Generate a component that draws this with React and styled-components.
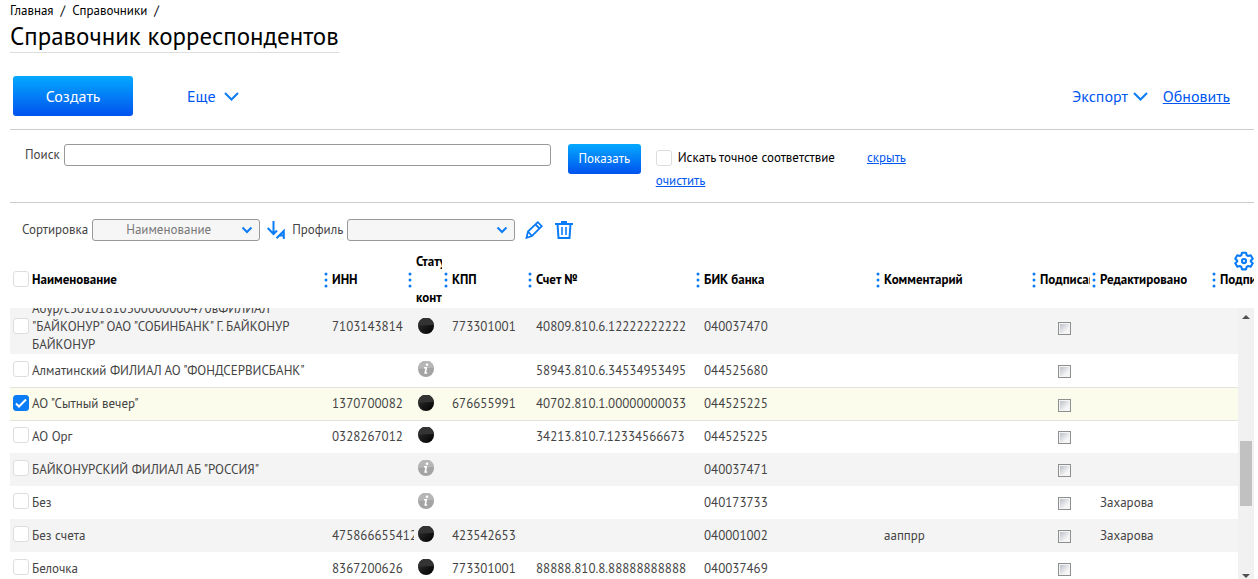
import { useLayoutEffect, useRef } from "react";
import styled, { createGlobalStyle } from "styled-components";

const GlobalStyle = createGlobalStyle`
  * {
    box-sizing: border-box;
  }

  body {
    margin: 0;
    background: #fff;
    color: #000;
    font: 13px/18px "PT Sans", "Noto Sans", sans-serif;
  }

  button, input, select {
    font: inherit;
  }
`;

const Page = styled.div`
  display: flex;
  flex-direction: column;
  height: 100vh;
  padding: 2px 4px 0 10px;
  overflow: hidden;
`;

const Breadcrumbs = styled.nav`
  display: flex;
  gap: 7px;

  a {
    color: #000;
    text-decoration: none;
  }
`;

const Title = styled.h1`
  align-self: flex-start;
  margin: 0;
  border-bottom: 1px solid #ddd;
  font-size: 25px;
  font-weight: 400;
  line-height: 32px;
`;

const Toolbar = styled.div`
  display: flex;
  align-items: center;
  padding: 23px 24px 13px 3px;
  border-bottom: 1px solid #ccc;
`;

const PrimaryButton = styled.button`
  width: ${({ $small }) => ($small ? "73px" : "120px")};
  height: ${({ $small }) => ($small ? "30px" : "40px")};
  padding: 0;
  border: none;
  border-radius: 3px;
  background: linear-gradient(#05a9ff, #0052ee);
  color: #fff;
  font-size: ${({ $small }) => ($small ? "13px" : "16px")};
  cursor: pointer;
`;

const MenuButton = styled.button`
  display: flex;
  align-items: center;
  gap: ${({ $gap }) => $gap};
  padding: 0;
  border: none;
  background: none;
  color: #0057f0;
  font-size: 16px;
  cursor: pointer;
`;

const MoreMenu = styled.div`
  margin-left: 54px;
`;

const ToolbarRight = styled.div`
  display: flex;
  align-items: center;
  gap: 15px;
  margin-left: auto;
`;

const Link = styled.a`
  color: #0057f0;
  font-size: ${({ $large }) => ($large ? "16px" : "13px")};
`;

const SearchBar = styled.form`
  display: flex;
  align-items: flex-start;
  height: 73px;
  padding: 14px 0 0 15px;
  border-bottom: 1px solid #ccc;
`;

const FieldLabel = styled.label`
  display: flex;
  align-items: center;
  gap: 4px;
  color: #444;
`;

const SearchInput = styled.input`
  width: 487px;
  height: 22px;
  padding: 0 6px;
  border: 1px solid #999;
  border-radius: 3px;
`;

const SearchButton = styled(PrimaryButton)`
  margin: 0 15px 0 17px;
`;

const SearchOptions = styled.div`
  display: flex;
  flex-direction: column;
  align-items: flex-start;
  gap: 5px;
  padding-top: 5px;
`;

const OptionsRow = styled.div`
  display: flex;
  align-items: center;
  gap: 32px;

  label {
    display: flex;
    align-items: center;
    gap: 6px;
  }
`;

const CheckBox = styled.input.attrs({ type: "checkbox" })`
  appearance: none;
  flex: none;
  width: 16px;
  height: 16px;
  margin: 0;
  border: 1px solid #ddd;
  border-radius: 3px;
  background: #fff;

  &:checked {
    border-color: #0a7cf5;
    background: #0a7cf5
      url("data:image/svg+xml,%3Csvg xmlns='http://www.w3.org/2000/svg' viewBox='0 0 16 16'%3E%3Cpath d='M3 8.5l3 3 7-7' fill='none' stroke='white' stroke-width='2'/%3E%3C/svg%3E")
      center / 16px;
  }
`;

const SortBar = styled.div`
  display: flex;
  align-items: center;
  gap: 7px;
  padding: 16px 0 11px 12px;
`;

const SelectBox = styled.span`
  display: grid;
  align-items: center;
  width: 168px;

  select,
  svg {
    grid-area: 1 / 1;
  }

  select {
    appearance: none;
    width: 100%;
    height: 22px;
    padding: 0 46px 0 33px;
    border: 1px solid #999;
    border-radius: 3px;
    background: #f6f6f6;
    color: #777;
  }

  svg {
    justify-self: end;
    margin-right: 7px;
    pointer-events: none;
  }
`;

const IconButton = styled.button`
  display: flex;
  padding: 0;
  border: none;
  background: none;
  color: #0a7cf5;
  cursor: pointer;
`;

const IconGroup = styled.div`
  display: flex;
  align-items: center;
  gap: 12px;
  padding-left: 3px;
`;

const GridWrap = styled.div`
  position: relative;
  display: flex;
  flex: 1;
  min-height: 0;
`;

const Grid = styled.table`
  display: flex;
  flex: 1;
  flex-direction: column;
  min-height: 0;

  thead,
  tbody {
    display: block;
  }

  tr {
    display: grid;
    grid-template-columns: 20px 300px 84px 36px 84px 168px 180px 156px 60px 120px minmax(0, 1fr);
    align-items: center;
  }
`;

const Head = styled.thead`
  margin-right: -16px;

  tr {
    height: 56px;
  }
`;

const HeadCell = styled.th`
  display: flex;
  align-items: center;
  justify-content: space-between;
  min-width: 0;
  padding: 0 0 0 2px;
  text-align: left;
  white-space: nowrap;

  span {
    overflow: hidden;
  }

  svg {
    flex: none;
  }
`;

const CheckCell = styled.td`
  display: flex;
  padding: 0 0 3px 3px;
`;

const Body = styled.tbody`
  flex: 1;
  min-height: 0;
  overflow-y: auto;
  scrollbar-width: none;
`;

const Row = styled.tr`
  min-height: 33px;
  background: ${({ $striped }) => ($striped ? "#f4f4f4" : "none")};
  ${({ $selected }) =>
    $selected &&
    `
    border-top: 1px solid #e4e4de;
    background: #fbfcec;
    box-shadow: 0 1px 0 #e4e4de;
  `}
`;

const Cell = styled.td`
  min-width: 0;
  padding: 0 0 0 2px;
  overflow: hidden;
  color: #444;
  white-space: ${({ $wrap }) => ($wrap ? "normal" : "nowrap")};
`;

const StatusCell = styled.td`
  display: flex;
  padding: 0 0 3px 4px;
`;

const SignCell = styled.td`
  display: flex;
  justify-content: center;
  padding: 2px 7px 0 0;
`;

const SignBox = styled.input.attrs({ type: "checkbox" })`
  appearance: none;
  width: 13px;
  height: 13px;
  margin: 0;
  padding: 1px;
  border: 1px solid #8e8f8f;
  background:
    linear-gradient(135deg, #bcc0c9, #f6f6f6 75%) content-box,
    #f4f4f4;
`;

const ScrollTrack = styled.div`
  display: flex;
  flex: none;
  flex-direction: column;
  align-items: center;
  width: 16px;
  margin-top: 56px;
  padding-top: 7px;
  background: #f1f1f1;
`;

const ScrollThumb = styled.div`
  flex: 0 0 65px;
  width: 12px;
  background: #c1c1c1;
`;

const ScrollSpace = styled.div`
  flex: ${({ $size }) => $size} 1 0;
`;

// sits over the header row, in the corner of the table
const Settings = styled(IconButton)`
  position: absolute;
  top: -1px;
  right: 0;
`;

function Chevron({ wide }) {
  return wide ? (
    <svg width="15" height="9" viewBox="0 0 15 9" fill="none" stroke="#0a7cf5" strokeWidth="2">
      <path d="M1 1l6.5 6.5L14 1" />
    </svg>
  ) : (
    <svg width="12" height="8" viewBox="0 0 12 8" fill="none" stroke="#0a7cf5" strokeWidth="2">
      <path d="M1.5 1.5L6 6l4.5-4.5" />
    </svg>
  );
}

function Dots() {
  return (
    <svg width="8" height="16" viewBox="0 0 8 16" fill="#0a7cf5">
      <circle cx="4" cy="2" r="1.5" />
      <circle cx="4" cy="8" r="1.5" />
      <circle cx="4" cy="14" r="1.5" />
    </svg>
  );
}

function SortIcon() {
  return (
    <svg width="18" height="18" viewBox="0 0 18 18" fill="none" stroke="currentColor" strokeWidth="2">
      <path d="M6.5 0v13M.7 7l5.8 6 3.5-3.500M9.500 17.300l7.300-7.300v8M12 14.500h5" />
    </svg>
  );
}

function PencilIcon() {
  return (
    <svg width="18" height="18" viewBox="0 0 18 18" fill="none" stroke="currentColor" strokeWidth="1.8">
      <path d="M3 10.500L12.800 1.200l4 4L7 15l-5.500 1.800zM3 10.500L7 15M10.500 3.500l4 4" />
    </svg>
  );
}

function TrashIcon() {
  return (
    <svg width="18" height="18" viewBox="0 0 18 18" fill="none" stroke="currentColor" strokeWidth="2">
      <path d="M0 3h18M6 1h6M2.500 3l1 14h11l1-14" />
      <path d="M7 6v8M11 6v8" strokeWidth="1.600" />
    </svg>
  );
}

function GearIcon() {
  return (
    <svg width="20" height="20" viewBox="0 0 24 24" fill="none" stroke="currentColor" strokeWidth="2.500" strokeLinejoin="round">
      <path d="M9.500 2h5l.7 3 1.800 1 3-.9 2.500 4.300-2.300 2.100v1l2.300 2.100-2.500 4.300-3-.9-1.800 1-.7 3h-5l-.7-3-1.800-1-3 .9-2.500-4.300 2.300-2.100v-1L1.500 9.400 4 5.100l3 .9 1.800-1z" />
      <circle cx="12" cy="12" r="2.500" />
    </svg>
  );
}

function StatusIcon({ status }) {
  return status === "info" ? (
    <svg width="16" height="16" viewBox="0 0 16 16">
      <circle cx="8" cy="8" r="8" fill="#a3a3a3" />
      <path d="M0 8a8 8 0 0 1 16-1q-8 0-16 1z" fill="#b6b6b6" />
      <circle cx="9" cy="3.800" r="1.300" fill="#fff" />
      <path d="M6 6.800h2.300L7.200 12h2" fill="none" stroke="#fff" strokeWidth="1.600" />
    </svg>
  ) : (
    <svg width="16" height="16" viewBox="0 0 16 16">
      <defs>
        <linearGradient id="ball" x1="0" y1="0" x2="1" y2="1">
          <stop offset="0" stopColor="#333" />
          <stop offset="1" stopColor="#000" />
        </linearGradient>
      </defs>
      <circle cx="8" cy="8" r="8" fill="url(#ball)" />
      <path d="M0 8a8 8 0 0 1 16-1q-8 0-16 1z" fill="#333" />
    </svg>
  );
}

const columns = [
  "Наименование",
  "ИНН",
  <>Статус<br /><br />контроля</>,
  "КПП",
  "Счет №",
  "БИК банка",
  "Комментарий",
  "Подписано",
  "Редактировано",
  "Подписано",
];

const rows = [
  { name: 'Абур/с30101810300000000470вФИЛИАЛ "БАЙКОНУР" ОАО "СОБИНБАНК" Г. БАЙКОНУР БАЙКОНУР', inn: "7103143814", status: "black", kpp: "773301001", account: "40809.810.6.12222222222", bik: "040037470" },
  { name: 'Алматинский ФИЛИАЛ АО "ФОНДСЕРВИСБАНК"', status: "info", account: "58943.810.6.34534953495", bik: "044525680" },
  { name: 'АО "Сытный вечер"', inn: "1370700082", status: "black", kpp: "676655991", account: "40702.810.1.00000000033", bik: "044525225", selected: true },
  { name: "АО Орг", inn: "0328267012", status: "black", account: "34213.810.7.12334566673", bik: "044525225" },
  { name: 'БАЙКОНУРСКИЙ ФИЛИАЛ АБ "РОССИЯ"', status: "info", bik: "040037471" },
  { name: "Без", status: "info", bik: "040173733", editor: "Захарова" },
  { name: "Без счета", inn: "475866655412", status: "black", kpp: "423542653", bik: "040001002", comment: "ааппрр", editor: "Захарова" },
  { name: "Белочка", inn: "8367200626", status: "black", kpp: "773301001", account: "88888.810.8.88888888888", bik: "040037469" },
];

function DirectoryRow({ row, striped }) {
  return (
    <Row $striped={striped} $selected={row.selected}>
      <CheckCell>
        <CheckBox aria-label={row.name} defaultChecked={row.selected} />
      </CheckCell>
      <Cell $wrap>{row.name}</Cell>
      <Cell>{row.inn}</Cell>
      <StatusCell>
        <StatusIcon status={row.status} />
      </StatusCell>
      <Cell>{row.kpp}</Cell>
      <Cell>{row.account}</Cell>
      <Cell>{row.bik}</Cell>
      <Cell>{row.comment}</Cell>
      <SignCell>
        <SignBox aria-label="Подписано" />
      </SignCell>
      <Cell>{row.editor}</Cell>
      <Cell />
    </Row>
  );
}

function DirectoryTable() {
  const bodyRef = useRef(null);

  useLayoutEffect(() => {
    bodyRef.current.scrollTop = 8;
  }, []);

  return (
    <GridWrap>
      <Grid>
        <Head>
          <tr>
            <CheckCell as="th">
              <CheckBox aria-label="Выбрать все" />
            </CheckCell>
            {columns.map((title, i) => (
              <HeadCell key={i}>
                <span>{title}</span>
                {i < columns.length - 1 && <Dots />}
              </HeadCell>
            ))}
          </tr>
        </Head>
        <Body ref={bodyRef}>
          {rows.map((row, i) => (
            <DirectoryRow key={i} row={row} striped={i % 2 === 0} />
          ))}
        </Body>
      </Grid>
      <ScrollTrack>
        <svg width="8" height="4" viewBox="0 0 8 4" fill="#505050">
          <path d="M0 4l4-4 4 4z" />
        </svg>
        <ScrollSpace $size={122} />
        <ScrollThumb />
        <ScrollSpace $size={68} />
        <svg width="8" height="5" viewBox="0 0 8 5" fill="#505050">
          <path d="M0 0h8L4 4z" />
        </svg>
      </ScrollTrack>
      <Settings aria-label="Настройки">
        <GearIcon />
      </Settings>
    </GridWrap>
  );
}

export default function App() {
  return (
    <Page>
      <GlobalStyle />
      <Breadcrumbs>
        <a href="#home">Главная</a>
        <span>/</span>
        <a href="#directories">Справочники</a>
        <span>/</span>
      </Breadcrumbs>
      <Title>Справочник корреспондентов</Title>

      <Toolbar>
        <PrimaryButton>Создать</PrimaryButton>
        <MoreMenu>
          <MenuButton $gap="8px">
            Еще <Chevron wide />
          </MenuButton>
        </MoreMenu>
        <ToolbarRight>
          <MenuButton $gap="5px">
            Экспорт <Chevron wide />
          </MenuButton>
          <Link href="#refresh" $large>Обновить</Link>
        </ToolbarRight>
      </Toolbar>

      <SearchBar>
        <FieldLabel>
          Поиск
          <SearchInput type="text" />
        </FieldLabel>
        <SearchButton type="button" $small>Показать</SearchButton>
        <SearchOptions>
          <OptionsRow>
            <label>
              <CheckBox />
              Искать точное соответствие
            </label>
            <Link href="#hide">скрыть</Link>
          </OptionsRow>
          <Link href="#clear">очистить</Link>
        </SearchOptions>
      </SearchBar>

      <SortBar>
        <FieldLabel>
          Сортировка
          <SelectBox>
            <select defaultValue="name">
              <option value="name">Наименование</option>
            </select>
            <Chevron />
          </SelectBox>
        </FieldLabel>
        <IconButton aria-label="Направление сортировки">
          <SortIcon />
        </IconButton>
        <FieldLabel>
          Профиль
          <SelectBox>
            <select />
            <Chevron />
          </SelectBox>
        </FieldLabel>
        <IconGroup>
          <IconButton aria-label="Изменить">
            <PencilIcon />
          </IconButton>
          <IconButton aria-label="Удалить">
            <TrashIcon />
          </IconButton>
        </IconGroup>
      </SortBar>

      <DirectoryTable />
    </Page>
  );
}
